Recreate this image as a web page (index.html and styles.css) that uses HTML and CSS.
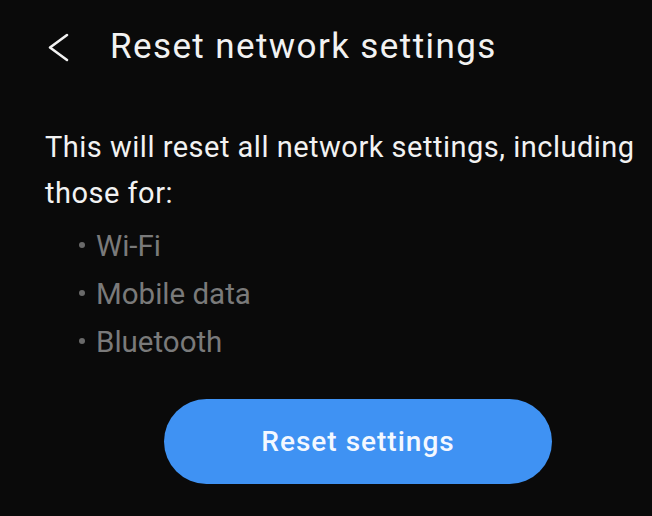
FILE: index.html
```html
<!DOCTYPE html>
<html lang="en">
<head>
    <meta charset="UTF-8">
    <meta name="viewport" content="width=device-width, initial-scale=1.0">
    <title>Reset network settings</title>
    <link rel="stylesheet" href="styles.css">
</head>
<body>
    <div class="screen">
        <div class="header">
            <div class="back">
                <svg width="24" height="34" viewBox="0 0 24 34">
                    <path d="M21 5 L4 17.5 L21 30" fill="none" stroke="#f2f2f2" stroke-width="2.6" stroke-linecap="round" stroke-linejoin="round"/>
                </svg>
            </div>
            <div class="title">Reset network settings</div>
        </div>
        <div class="content">
            <p class="desc">This will reset all network settings, including those for:</p>
            <ul class="items">
                <li>Wi-Fi</li>
                <li>Mobile data</li>
                <li>Bluetooth</li>
            </ul>
            <div class="actions">
                <div class="button">Reset settings</div>
            </div>
        </div>
    </div>
</body>
</html>
```

FILE: styles.css
```css
body {
    margin: 0;
    background-color: #0a0a0a;
    font-family: Roboto, "Noto Sans", sans-serif;
    color: #f2f2f2;
}
.screen {
    width: 652px;
    height: 516px;
    overflow: hidden;
}
.header {
    display: flex;
    align-items: center;
    height: 50px;
    padding: 22px 0 0 46px;
}
.back {
    width: 64px;
    display: flex;
    align-items: center;
}
.title {
    font-size: 35px;
    line-height: 50px;
    letter-spacing: 1.4px;
    white-space: nowrap;
}
.content {
    padding: 52px 0 0 45px;
}
.desc {
    margin: 0;
    font-size: 29px;
    line-height: 46px;
    width: 600px;
    letter-spacing: 0.5px;
}
.items {
    list-style: none;
    margin: 6px 0 0 0;
    padding: 0 0 0 34px;
    color: #7a7a7a;
}
.items li {
    position: relative;
    font-size: 29.5px;
    line-height: 48px;
    padding-left: 17px;
}
.items li::before {
    content: "";
    position: absolute;
    left: 0;
    top: 20px;
    width: 6px;
    height: 6px;
    border-radius: 50%;
    background-color: #6a6a6a;
}
.actions {
    display: flex;
    padding: 33px 0 0 119px;
}
.button {
    width: 388px;
    height: 85px;
    border-radius: 43px;
    background-color: #3f92f3;
    color: #f4f8ff;
    font-size: 28px;
    font-weight: 500;
    letter-spacing: 1px;
    display: flex;
    align-items: center;
    justify-content: center;
}
```
